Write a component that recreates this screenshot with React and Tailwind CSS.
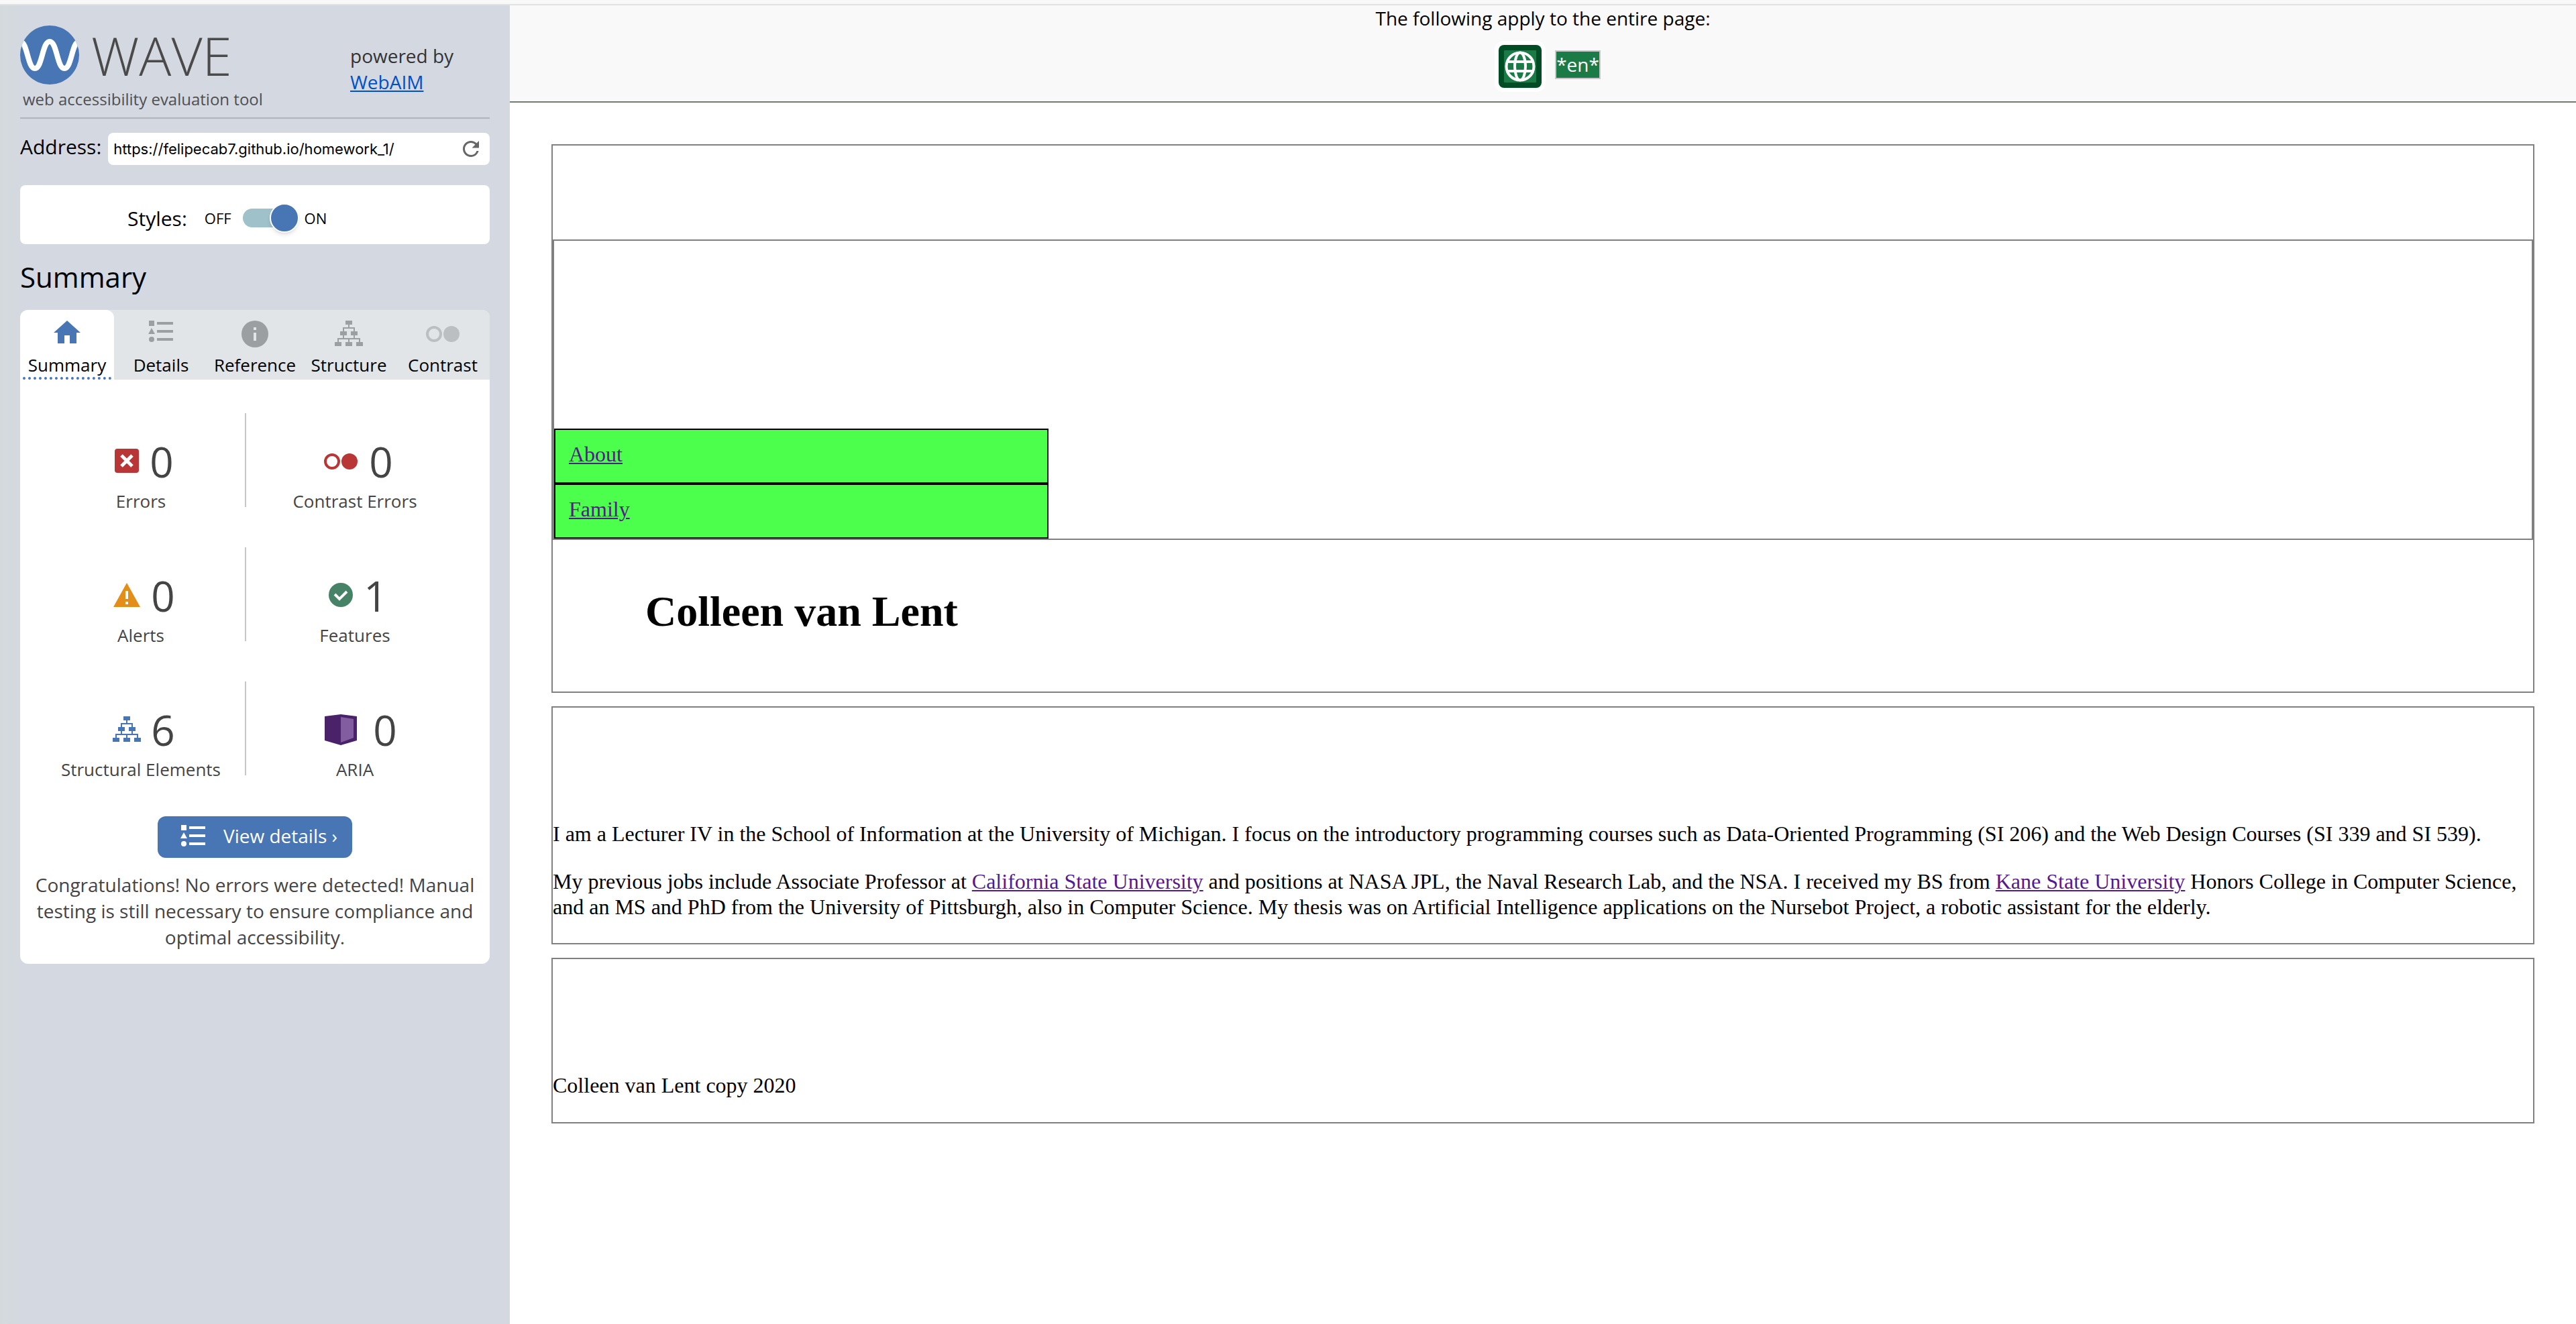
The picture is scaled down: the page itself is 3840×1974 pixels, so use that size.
import { MdRefresh } from "react-icons/md";

function WaveLogo() {
  return (
    <svg className="size-[88px] shrink-0" viewBox="0 0 88 88" aria-hidden="true">
      <clipPath id="logo-disc">
        <circle cx="44" cy="44" r="44" />
      </clipPath>
      <g clipPath="url(#logo-disc)">
        <rect width="88" height="88" fill="#4876b5" />
        <path
          d="M0 24C11 24 11 64 22 64S33 24 44 24S55 64 66 64S77 24 88 24"
          fill="none"
          stroke="#fff"
          strokeWidth="8"
        />
      </g>
    </svg>
  );
}

function Icon({ className = "", children }) {
  return (
    <svg
      className={`h-[42px] w-14 shrink-0 ${className}`}
      viewBox="0 0 56 42"
      fill="currentColor"
      aria-hidden="true"
    >
      {children}
    </svg>
  );
}

const HomeIcon = (p) => (
  <Icon {...p}>
    <path d="M28 1L48 19H42V35H32V23H24V35H14V19H8Z" />
  </Icon>
);

const ListIcon = (p) => (
  <Icon {...p}>
    <rect x="10" y="1" width="8" height="8" />
    <path d="M14 12L19 21H9Z" />
    <circle cx="14" cy="29" r="4" />
    <path d="M22 3H46V7H22ZM22 15H46V19H22ZM22 27H46V31H22Z" />
  </Icon>
);

const InfoIcon = (p) => (
  <Icon {...p}>
    <circle cx="28" cy="21" r="20" />
    <path d="M26 11H30V15H26ZM26 19H30V31H26Z" fill="#e1e5e7" />
  </Icon>
);

const TreeIcon = (p) => (
  <Icon {...p}>
    <path d="M23 1H33V7H23ZM15 17H25V23H15ZM31 17H41V23H31ZM7 33H17V39H7ZM23 33H33V39H23ZM39 33H49V39H39Z" />
    <path
      d="M28 7V12M20 17V12H36V17M20 23V28M36 23V28M12 33V28H44V33M28 28V33"
      fill="none"
      stroke="currentColor"
      strokeWidth="2"
    />
  </Icon>
);

const ContrastIcon = (p) => (
  <Icon {...p}>
    <circle cx="15" cy="21" r="10" fill="none" stroke="currentColor" strokeWidth="4" />
    <circle cx="41" cy="21" r="12" />
  </Icon>
);

const ErrorIcon = (p) => (
  <Icon {...p}>
    <rect x="10" y="2" width="36" height="36" rx="4" />
    <path d="M20 12L36 28M36 12L20 28" fill="none" stroke="#fff" strokeWidth="5" />
  </Icon>
);

const AlertIcon = (p) => (
  <Icon {...p}>
    <path d="M28 2L48 38H8Z" />
    <path d="M26 14H30V26H26ZM26 30H30V34H26Z" fill="#fff" />
  </Icon>
);

const FeatureIcon = (p) => (
  <Icon {...p}>
    <circle cx="28" cy="20" r="18" />
    <path d="M19 19L26 26L37 15" fill="none" stroke="#fff" strokeWidth="4" />
  </Icon>
);

const AriaIcon = () => (
  <svg className="h-[46px] w-12 shrink-0" viewBox="0 0 48 46" aria-hidden="true">
    <path d="M0 3L24 0L48 3V39L24 46L0 39Z" fill="#4a2269" />
    <path d="M24 4L43 7V35L24 42Z" fill="#825d9f" />
  </svg>
);

const tabs = [
  { label: "Summary", icon: HomeIcon, tone: "text-[#4876b5]" },
  { label: "Details", icon: ListIcon, tone: "text-[#9b9fa2]" },
  { label: "Reference", icon: InfoIcon, tone: "text-[#9b9fa2]" },
  { label: "Structure", icon: TreeIcon, tone: "text-[#9b9fa2]" },
  { label: "Contrast", icon: ContrastIcon, tone: "text-[#bbbfc1]" },
];

const stats = [
  [
    { label: "Errors", value: 0, icon: ErrorIcon, tone: "text-[#b93637]", box: "w-[52px]" },
    { label: "Contrast Errors", value: 0, icon: ContrastIcon, tone: "text-[#b93637]", box: "w-[68px]" },
  ],
  [
    { label: "Alerts", value: 0, icon: AlertIcon, tone: "text-[#e38e18]", box: "w-14" },
    { label: "Features", value: 1, icon: FeatureIcon, tone: "text-[#468265]", box: "w-[52px]" },
  ],
  [
    { label: "Structural Elements", value: 6, icon: TreeIcon, tone: "text-[#4876b5]", box: "w-14" },
    { label: "ARIA", value: 0, icon: AriaIcon, tone: "text-[#4a2269]", box: "w-20" },
  ],
];

function Tab({ label, icon: TabIcon, tone, active }) {
  return (
    <button
      type="button"
      role="tab"
      aria-selected={active}
      className={`flex flex-col items-center px-1 pt-[15px] ${active ? "rounded-t-xl bg-white" : ""}`}
    >
      <TabIcon className={tone} />
      <span
        className={`mt-[7px] w-full border-b-4 border-dotted text-center text-[26px] leading-9 ${
          active ? "border-[#4876b5]" : "border-transparent"
        }`}
      >
        {label}
      </span>
    </button>
  );
}

function Stat({ label, value, icon: StatIcon, tone, box }) {
  return (
    <div className="flex flex-col items-center pt-[42px]">
      <div className="flex items-center gap-2 pl-0.5">
        <span className={`flex justify-center ${box} ${tone}`}>
          <StatIcon />
        </span>
        <span className="text-[62px] leading-[60px]">{value}</span>
      </div>
      <span className="mt-[11px] text-[26px] leading-9">{label}</span>
    </div>
  );
}

function Sidebar() {
  return (
    <aside className="w-[760px] shrink-0 bg-linear-to-r from-[#d4dadc] to-[#d4d8e1] to-5% px-[30px] pt-[30px]">
      <header className="grid grid-cols-[492px_1fr] border-b-2 border-[#afb5b8] pb-[11px]">
        <div>
          <div className="flex gap-[18px]">
            <WaveLogo />
            <span className="text-[80px] leading-[88px] font-light text-[#4a4a4a]">WAVE</span>
          </div>
          <p className="mt-1.5 pl-1 text-2xl leading-8 text-[#4f4f4f]">
            web accessibility evaluation tool
          </p>
        </div>
        <p className="mt-[26px] text-[28px] leading-[39px] text-[#333]">
          powered by
          <br />
          <a href="#webaim" className="text-[#0050c8] underline decoration-2 underline-offset-2">
            WebAIM
          </a>
        </p>
      </header>

      <form className="mt-[21px] flex items-start gap-[10px]" onSubmit={(e) => e.preventDefault()}>
        <label htmlFor="address" className="text-[30px] leading-[41px]">
          Address:
        </label>
        <div className="flex h-12 min-w-0 flex-1 items-center rounded-lg bg-white pr-[10px] pl-2">
          <input
            id="address"
            type="text"
            defaultValue="https://felipecab7.github.io/homework_1/"
            className="h-full min-w-0 flex-1 font-['Inter',sans-serif] text-[22px] outline-none"
          />
          <button type="submit" aria-label="Refresh" className="text-[#666]">
            <MdRefresh className="size-9" />
          </button>
        </div>
      </form>

      <div className="mt-[30px] flex h-[88px] items-center rounded-lg bg-white pt-[10px] pl-40">
        <label htmlFor="styles" className="text-[30px]">
          Styles:
        </label>
        <span className="ml-[26px] text-[22px]">OFF</span>
        <input
          id="styles"
          type="checkbox"
          role="switch"
          defaultChecked
          className="relative ml-[17px] h-7 w-[84px] appearance-none rounded-full bg-[#9fc1ca] after:absolute after:-top-2 after:left-0 after:size-11 after:rounded-full after:border-2 after:border-white after:bg-[#4876b5] after:shadow-md checked:after:left-10"
        />
        <span className="ml-2 text-[22px]">ON</span>
      </div>

      <h1 className="mt-5 text-[42px] leading-[57px]">Summary</h1>

      <section className="mt-[21px] rounded-xl bg-white pb-5 text-[#444]">
        <div role="tablist" className="grid grid-cols-5 rounded-t-xl bg-[#e1e5e7] text-black">
          {tabs.map((tab, i) => (
            <Tab key={tab.label} {...tab} active={i === 0} />
          ))}
        </div>

        <div className="mt-[50px] flex flex-col gap-[51px] pr-[39px] pl-[25px]">
          {stats.map(([left, right]) => (
            <div key={left.label} className="grid grid-cols-[310px_2px_1fr]">
              <Stat {...left} />
              <span className="h-[140px] bg-[#c6c6c6]" />
              <Stat {...right} />
            </div>
          ))}
        </div>

        <button
          type="button"
          className="mx-auto mt-[52px] flex h-[62px] items-center gap-[17px] rounded-xl bg-[#4876b5] pr-[22px] pb-1 pl-[25px] text-[28px] text-white"
        >
          <ListIcon className="mt-2" />
          View details ›
        </button>

        <p className="mt-[21px] text-center text-[28px] leading-[39px]">
          Congratulations! No errors were detected! Manual testing is still necessary to ensure
          compliance and optimal accessibility.
        </p>
      </section>
    </aside>
  );
}

function GlobeIcon() {
  return (
    <svg className="size-16" viewBox="0 0 64 64" aria-hidden="true">
      <rect x="8" y="8" width="48" height="48" rx="1" fill="#1a7b46" />
      <g fill="none" stroke="#fff" strokeWidth="4">
        <circle cx="32" cy="32" r="20.5" />
        <ellipse cx="32" cy="32" rx="8" ry="20.5" />
        <path d="M13 25H51M13 39H51" />
      </g>
    </svg>
  );
}

function PageNotes() {
  return (
    <div className="border-b-2 border-[#6f7c6f] bg-[#f9f9f9] pb-5 text-center text-[28px] leading-[39px]">
      <p>The following apply to the entire page:</p>
      <div className="mt-5 flex items-start justify-center gap-5 pl-5">
        <button
          type="button"
          aria-label="Language"
          className="rounded-lg bg-[#004c25] ring-6 ring-white"
        >
          <GlobeIcon />
        </button>
        <span className="mt-2 border-2 border-[#c8c8c8] bg-[#1a7b46] text-white">*en*</span>
      </div>
    </div>
  );
}

const linkStyle = "text-[#551a8b] underline decoration-2 underline-offset-2";

function EvaluatedPage() {
  return (
    <main className="flex flex-col gap-5 p-[62px] font-['Liberation_Serif',serif] text-[32px] leading-[38px]">
      <header className="border-2 border-[#808080] pt-[140px] pb-[82px]">
        <nav className="border-2 border-[#808080] pt-[280px]">
          <ul>
            {["About", "Family"].map((item) => (
              <li
                key={item}
                className="w-1/4 border-2 border-black bg-[#4dff4d] px-5 pt-[17px] pb-[23px]"
              >
                <a href={`#${item.toLowerCase()}`} className={linkStyle}>
                  {item}
                </a>
              </li>
            ))}
          </ul>
        </nav>
        <h1 className="mt-[70px] pl-[138px] text-[64px] leading-[74px] font-bold">
          Colleen van Lent
        </h1>
      </header>

      <section className="flex flex-col gap-[33px] border-2 border-[#808080] pt-[169px] pb-[35px]">
        <p>
          I am a Lecturer IV in the School of Information at the University of Michigan. I focus on
          the introductory programming courses such as Data-Oriented Programming (SI 206) and the
          Web Design Courses (SI 339 and SI 539).
        </p>
        <p>
          My previous jobs include Associate Professor at{" "}
          <a href="#csu" className={linkStyle}>
            California State University
          </a>{" "}
          and positions at NASA JPL, the Naval Research Lab, and the NSA. I received my BS from{" "}
          <a href="#ksu" className={linkStyle}>
            Kane State University
          </a>{" "}
          Honors College in Computer Science, and an MS and PhD from the University of Pittsburgh,
          also in Computer Science. My thesis was on Artificial Intelligence applications on the
          Nursebot Project, a robotic assistant for the elderly.
        </p>
      </section>

      <footer className="border-2 border-[#808080] pt-[169px] pb-9">
        <p>Colleen van Lent copy 2020</p>
      </footer>
    </main>
  );
}

export default function App() {
  return (
    <div className="flex min-h-screen flex-col bg-white font-['Open_Sans',sans-serif] text-black">
      <div className="h-2 border-b-2 border-[#e1e1e1] bg-[#f8f8f8]" />
      <div className="flex flex-1">
        <Sidebar />
        <div className="min-w-0 flex-1">
          <PageNotes />
          <EvaluatedPage />
        </div>
      </div>
    </div>
  );
}
